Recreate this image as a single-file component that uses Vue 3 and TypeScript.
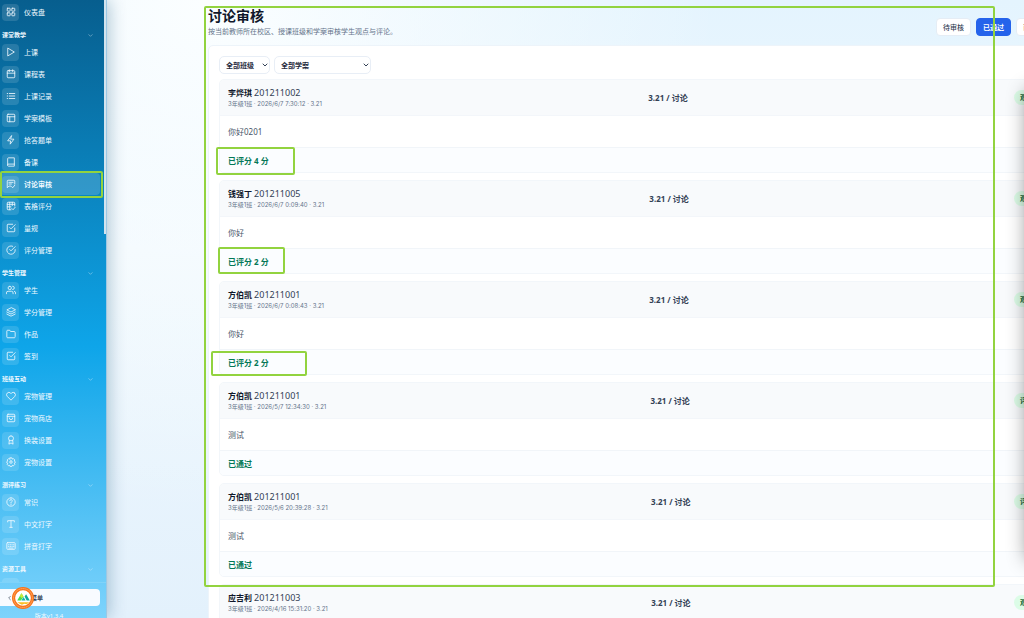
<script setup lang="ts">
import { ref } from 'vue'

interface NavItem { label: string; icon: string }
interface NavGroup { title: string; items: NavItem[] }
interface Post { name: string; no: string; time: string; text: string; status: string; kind: string }

const icons: Record<string, string> = {
  grid: 'M4 3h5a1 1 0 0 1 1 1v5a1 1 0 0 1-1 1H4a1 1 0 0 1-1-1V4a1 1 0 0 1 1-1zM15 3h5a1 1 0 0 1 1 1v5a1 1 0 0 1-1 1h-5a1 1 0 0 1-1-1V4a1 1 0 0 1 1-1zM4 14h5a1 1 0 0 1 1 1v5a1 1 0 0 1-1 1H4a1 1 0 0 1-1-1v-5a1 1 0 0 1 1-1zM15 14h5a1 1 0 0 1 1 1v5a1 1 0 0 1-1 1h-5a1 1 0 0 1-1-1v-5a1 1 0 0 1 1-1z',
  play: 'M5 3l15 9-15 9z',
  calendar: 'M5 4h14a2 2 0 0 1 2 2v13a2 2 0 0 1-2 2H5a2 2 0 0 1-2-2V6a2 2 0 0 1 2-2zM3 10h18M8 2v4M16 2v4',
  list: 'M8 6h13M8 12h13M8 18h13M3 6h1M3 12h1M3 18h1',
  layout: 'M5 3h14a2 2 0 0 1 2 2v14a2 2 0 0 1-2 2H5a2 2 0 0 1-2-2V5a2 2 0 0 1 2-2zM3 9h18M9 9v12',
  bolt: 'M13 2L4 14h7l-1 8 9-12h-7z',
  book: 'M4 19V4a2 2 0 0 1 2-2h14v20H6a2 2 0 0 1-2-3 2 2 0 0 1 2-2h14',
  review: 'M21 12V5a2 2 0 0 0-2-2H5a2 2 0 0 0-2 2v16l4-4h4M7 8h10M7 12h6M13 18l3 3 5-6',
  table: 'M21 12V5a2 2 0 0 0-2-2H5a2 2 0 0 0-2 2v14a2 2 0 0 0 2 2h7M3 8h18M9 3v18M3 14h9M15 3v8M14 18l3 3 5-6',
  check: 'M9 11l3 3L22 4M21 12v7a2 2 0 0 1-2 2H5a2 2 0 0 1-2-2V5a2 2 0 0 1 2-2h11',
  circleCheck: 'M22 11v1a10 10 0 1 1-6-9M22 4L12 14l-3-3',
  users: 'M17 21v-2a4 4 0 0 0-4-4H5a4 4 0 0 0-4 4v2M9 3a4 4 0 1 1 0 8 4 4 0 0 1 0-8M23 21v-2a4 4 0 0 0-3-4M16 3a4 4 0 0 1 0 8',
  layers: 'M12 2L2 7l10 5 10-5zM2 12l10 5 10-5M2 17l10 5 10-5',
  folder: 'M22 19a2 2 0 0 1-2 2H4a2 2 0 0 1-2-2V5a2 2 0 0 1 2-2h5l2 3h9a2 2 0 0 1 2 2z',
  heart: 'M21 5a5.500 5.500 0 0 0-8 0l-1 1-1-1a5.500 5.500 0 0 0-8 8l9 9 9-9a5.500 5.500 0 0 0 0-8z',
  bag: 'M5 3h14a2 2 0 0 1 2 2v14a2 2 0 0 1-2 2H5a2 2 0 0 1-2-2V5a2 2 0 0 1 2-2zM3 8h18M8 12a4 4 0 0 0 8 0',
  award: 'M12 2a6 6 0 1 1 0 12 6 6 0 0 1 0-12M8 13l-1 9 5-3 5 3-1-9',
  gear: 'M12 9a3 3 0 1 1 0 6 3 3 0 0 1 0-6M10 2h4l1 3 3-1 3 3-1 3 2 1v3l-2 1 1 3-3 3-3-1-1 3h-4l-1-3-3 1-3-3 1-3-2-1v-3l2-1-1-3 3-3 3 1z',
  help: 'M12 2a10 10 0 1 1 0 20 10 10 0 0 1 0-20M9 9a3 3 0 1 1 4 3l-1 1v1M12 17v1',
  text: 'M4 7V4h16v3M12 4v16M9 20h6',
  keyboard: 'M4 4h16a2 2 0 0 1 2 2v12a2 2 0 0 1-2 2H4a2 2 0 0 1-2-2V6a2 2 0 0 1 2-2zM6 9h1M10 9h1M14 9h1M18 9h1M6 13h1M10 13h1M14 13h1M18 13h1M7 17h10',
}

const active = '讨论审核'
const groups: NavGroup[] = [
  { title: '', items: [{ label: '仪表盘', icon: 'grid' }] },
  {
    title: '课堂教学',
    items: [
      { label: '上课', icon: 'play' }, { label: '课程表', icon: 'calendar' },
      { label: '上课记录', icon: 'list' }, { label: '学案模板', icon: 'layout' },
      { label: '抢答题单', icon: 'bolt' }, { label: '备课', icon: 'book' },
      { label: '讨论审核', icon: 'review' }, { label: '表格评分', icon: 'table' },
      { label: '量规', icon: 'check' }, { label: '评分管理', icon: 'circleCheck' },
    ],
  },
  {
    title: '学生管理',
    items: [
      { label: '学生', icon: 'users' }, { label: '学分管理', icon: 'layers' },
      { label: '作品', icon: 'folder' }, { label: '签到', icon: 'check' },
    ],
  },
  {
    title: '班级互动',
    items: [
      { label: '宠物管理', icon: 'heart' }, { label: '宠物商店', icon: 'bag' },
      { label: '换装设置', icon: 'award' }, { label: '宠物设置', icon: 'gear' },
    ],
  },
  {
    title: '测评练习',
    items: [
      { label: '常识', icon: 'help' }, { label: '中文打字', icon: 'text' },
      { label: '拼音打字', icon: 'keyboard' },
    ],
  },
  { title: '资源工具', items: [{ label: '', icon: '' }] },
]

const tabs = ['待审核', '已通过', '已驳回']
const currentTab = ref('已通过')
const klass = ref('全部班级')
const plan = ref('全部学案')

const posts: Post[] = [
  { name: '李烨琪', no: '201211002', time: '2026/6/7 7:30:12', text: '你好0201', status: '已评分 4 分', kind: '观点' },
  { name: '钱强丁', no: '201211005', time: '2026/6/7 0:09:40', text: '你好', status: '已评分 2 分', kind: '观点' },
  { name: '方伯凯', no: '201211001', time: '2026/6/7 0:08:43', text: '你好', status: '已评分 2 分', kind: '观点' },
  { name: '方伯凯', no: '201211001', time: '2026/5/7 12:34:30', text: '测试', status: '已通过', kind: '评论' },
  { name: '方伯凯', no: '201211001', time: '2026/5/6 20:39:28', text: '测试', status: '已通过', kind: '评论' },
  { name: '应吉利', no: '201211003', time: '2026/4/16 15:31:20', text: '测试', status: '已通过', kind: '观点' },
]
</script>

<template>
  <div class="app">
    <aside class="sidebar">
      <nav class="nav">
        <section v-for="(g, i) in groups" :key="i" class="group">
          <button v-if="g.title" class="group-title" type="button">
            <span>{{ g.title }}</span>
            <svg class="chev" viewBox="0 0 24 24"><path d="M4 8l8 8 8-8" /></svg>
          </button>
          <a
            v-for="(n, j) in g.items" :key="j" href="#" class="item"
            :class="{ active: n.label === active }"
          >
            <span class="tile">
              <svg v-if="n.icon" viewBox="0 0 24 24"><path :d="icons[n.icon]" /></svg>
            </span>
            <span>{{ n.label }}</span>
          </a>
        </section>
      </nav>
      <span class="thumb"></span>
      <footer class="side-foot">
        <button class="collapse" type="button">
          <svg class="back" viewBox="0 0 24 24"><path d="M16 4l-8 8 8 8" /></svg>
          <span>收起菜单</span>
        </button>
        <svg class="logo" viewBox="0 0 42 42">
          <circle cx="21" cy="21" r="18" fill="#fff" stroke="#f97316" stroke-width="6" />
          <circle cx="21" cy="21" r="18" fill="none" stroke="#fb9a55" stroke-width="2" stroke-dasharray="2 2" />
          <path d="M10 26l8-14 4 6-5 8z" fill="#4ade50" />
          <path d="M18 12l4 6-4 3-3-4z" fill="#c9e83a" />
          <path d="M18 26l4-7 4 7z" fill="#14b8a6" />
          <path d="M24 18l3-4 7 12h-6z" fill="#10a99b" />
          <path d="M10 29h23l-5 4-4-1-5 2-4-2z" fill="#fbbf24" />
        </svg>
        <small class="version">版本v1.3.4</small>
      </footer>
    </aside>

    <main class="main">
      <header class="head">
        <div>
          <h1>讨论审核</h1>
          <p>按当前教师所在校区、授课班级和学案审核学生观点与评论。</p>
        </div>
        <div class="tabs">
          <button
            v-for="t in tabs" :key="t" type="button"
            :class="{ on: t === currentTab }" @click="currentTab = t"
          >{{ t }}</button>
        </div>
      </header>

      <section class="panel">
        <div class="filters">
          <div class="pick">
            <select v-model="klass" aria-label="班级"><option>全部班级</option></select>
            <svg viewBox="0 0 24 24"><path d="M4 8l8 8 8-8" /></svg>
          </div>
          <div class="pick wide">
            <select v-model="plan" aria-label="学案"><option>全部学案</option></select>
            <svg viewBox="0 0 24 24"><path d="M4 8l8 8 8-8" /></svg>
          </div>
        </div>

        <article v-for="(p, i) in posts" :key="i" class="card">
          <header class="card-head">
            <div>
              <div class="who"><strong>{{ p.name }}</strong> <span>{{ p.no }}</span></div>
              <div class="meta">3年级1班 · {{ p.time }} · 3.21</div>
            </div>
            <div class="topic">3.21 / 讨论</div>
            <span class="badge">{{ p.kind }}</span>
          </header>
          <p class="card-body">{{ p.text }}</p>
          <footer class="card-foot">{{ p.status }}</footer>
        </article>
      </section>
    </main>

    <div class="drawer"></div>
    <div class="mark frame"></div>
    <div class="mark nav-mark"></div>
    <div class="mark score-a"></div>
    <div class="mark score-b"></div>
    <div class="mark score-c"></div>
  </div>
</template>

<style>
body { margin: 0; overflow: hidden; }
</style>

<style scoped>
* { box-sizing: border-box; }
.app {
  position: relative;
  display: flex;
  height: 100vh;
  overflow: hidden;
  font-family: "Noto Sans", "Noto Sans CJK SC", sans-serif;
  font-size: 8px;
  color: #334155;
  background:
    radial-gradient(circle at 20% 0, #fbfeff 0, rgba(251, 254, 255, 0) 50%),
    linear-gradient(180deg, #e4f4fe 0, #eff8fe 40%, #e3f1fc 100%);
}
button, select { font: inherit; color: inherit; margin: 0; }
svg { fill: none; stroke: currentColor; stroke-width: 2; stroke-linecap: round; stroke-linejoin: round; }

.sidebar {
  position: relative;
  z-index: 1;
  display: flex;
  flex-direction: column;
  flex: 0 0 107px;
  color: #f0f9ff;
  background: linear-gradient(180deg, #075e8e 0, #0ea5e9 56%, #7dd3fc 100%);
  border-right: 1px solid #9cc8e4;
  box-shadow: 2px 0 16px rgba(7, 70, 110, 0.3);
}
.nav { flex: 1; min-height: 0; overflow: hidden; padding-top: 1px; }
.group-title {
  display: flex;
  justify-content: space-between;
  align-items: center;
  width: 100%;
  height: 18px;
  padding: 7px 13px 0 2px;
  border: 0;
  background: none;
  font-size: 6px;
  font-weight: 700;
  line-height: 11px;
}
.chev { width: 5px; height: 5px; opacity: 0.6; stroke-width: 3; }
.item {
  display: flex;
  align-items: center;
  gap: 5px;
  height: 22px;
  margin-right: 6px;
  padding-left: 2px;
  border-radius: 4px;
  color: inherit;
  text-decoration: none;
  font-size: 7px;
}
.item.active { font-weight: 700; background: rgba(255, 255, 255, 0.16); }
.tile {
  display: grid;
  place-items: center;
  width: 17px;
  height: 17px;
  border-radius: 4px;
  background: rgba(255, 255, 255, 0.13);
}
.tile svg { width: 10px; height: 10px; }
.thumb {
  position: absolute;
  top: 0;
  right: 0;
  width: 2px;
  height: 234px;
  background: #d3e4ef;
}
.side-foot { position: relative; height: 36px; padding-top: 6px; border-top: 1px solid rgba(255, 255, 255, 0.12); }
.collapse {
  display: flex;
  align-items: center;
  gap: 7px;
  width: 100px;
  height: 17px;
  padding: 0 7px;
  border: 0;
  border-radius: 0 4px 4px 0;
  background: #f8fbff;
  color: #334155;
  font-size: 6px;
  font-weight: 700;
}
.back { width: 5px; height: 6px; stroke-width: 3; }
.logo { position: absolute; left: 12px; top: 4px; width: 22px; height: 22px; stroke: none; }
.version { display: block; padding-top: 5px; margin-right: 8px; text-align: center; font-size: 6px; line-height: 10px; }

.main { flex: 1; min-width: 0; padding: 5px 0 0 101px; margin-right: -36px; }
.head { display: flex; justify-content: space-between; align-items: center; height: 40px; padding-right: 9px; }
.head > div:first-child { padding-bottom: 6px; }
h1 { margin: 0; font-size: 14px; line-height: 20px; color: #0f172a; }
.head p { margin: 0; font-size: 7px; line-height: 12px; color: #64748b; }
.tabs { display: flex; gap: 5px; padding-top: 4px; }
.tabs button {
  height: 18px;
  padding: 0 6px;
  border: 1px solid #e5edf5;
  border-radius: 4px;
  background: #fff;
  font-size: 7px;
  font-weight: 500;
}
.tabs .on { background: #2563eb; border-color: #2563eb; color: #fff; font-weight: 700; }

.panel { padding: 10px; border: 1px solid #edf4fa; border-radius: 5px; background: #fff; }
.filters { display: flex; gap: 4px; margin-bottom: 5px; }
.pick { position: relative; width: 51px; }
.pick.wide { width: 97px; }
.pick select {
  display: block;
  width: 100%;
  height: 18px;
  padding: 0 6px;
  border: 1px solid #e8eef6;
  border-radius: 5px;
  appearance: none;
  background: #fff;
  font-size: 7px;
  font-weight: 600;
  color: #1e293b;
}
.pick svg { position: absolute; right: 2px; top: 6px; width: 6px; height: 6px; stroke-width: 4; pointer-events: none; }

.card { margin-bottom: 7px; border: 1px solid #f2f6fa; border-radius: 5px; overflow: hidden; background: #fff; }
.card-head {
  display: flex;
  justify-content: space-between;
  align-items: center;
  height: 36px;
  padding: 0 8px;
  background: #f8fafc;
  border-bottom: 1px solid #f3f6fa;
}
.who { line-height: 13px; }
.who strong { color: #0f172a; }
.who span { font-size: 9px; }
.meta { font-family: Inter, "Noto Sans CJK SC", sans-serif; font-size: 6px; line-height: 10px; color: #64748b; }
.topic { font-weight: 700; }
.badge { padding: 0 6px; border-radius: 8px; background: #dcfce7; color: #166534; font-size: 7px; font-weight: 700; line-height: 15px; }
.card-body { margin: 0; padding: 0 8px; line-height: 31px; color: #475569; }
.card-foot {
  height: 25px;
  padding: 0 8px;
  border-top: 1px solid #f1f5f9;
  background: #fbfdff;
  color: #047857;
  font-weight: 700;
  line-height: 25px;
}

.drawer { position: absolute; z-index: 2; left: 100%; top: 90px; width: 40px; height: 470px; margin-left: 3px; box-shadow: 0 0 20px rgba(0, 0, 0, 0.45); }
.mark { position: absolute; z-index: 3; border: 2px solid #92d33f; border-radius: 2px; pointer-events: none; }
.frame { left: 204px; top: 6px; width: 791px; height: 581px; }
.nav-mark { left: 0; top: 171px; width: 103px; height: 27px; }
.score-a { left: 216px; top: 147px; width: 79px; height: 28px; }
.score-b { left: 218px; top: 247px; width: 67px; height: 27px; }
.score-c { left: 211px; top: 351px; width: 96px; height: 25px; }
</style>
